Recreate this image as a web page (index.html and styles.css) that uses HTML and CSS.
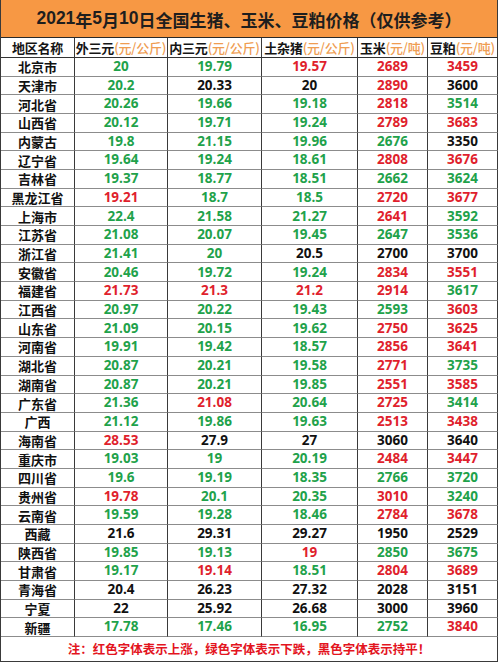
FILE: index.html
```html
<!DOCTYPE html>
<html lang="zh-CN">
<head>
<meta charset="utf-8">
<title>2021年5月10日全国生猪、玉米、豆粕价格</title>
<link rel="stylesheet" href="styles.css">
</head>
<body>
<div class="sheet">
  <div class="title"><span class="tn">2021</span>年<span class="tn">5</span>月<span class="tn">10</span>日全国生猪、玉米、豆粕价格（仅供参考）</div>

  <div class="c hd">地区名称</div>
  <div class="c hd">外三元<span class="u">(元/公斤)</span></div>
  <div class="c hd">内三元<span class="u">(元/公斤)</span></div>
  <div class="c hd">土杂猪<span class="u">(元/公斤)</span></div>
  <div class="c hd">玉米<span class="u">(元/吨)</span></div>
  <div class="c hd">豆粕<span class="u">(元/吨)</span></div>

  <div class="c n">北京市</div><div class="c g">20</div><div class="c g">19.79</div><div class="c r">19.57</div><div class="c r">2689</div><div class="c r">3459</div>
  <div class="c n">天津市</div><div class="c g">20.2</div><div class="c">20.33</div><div class="c">20</div><div class="c r">2890</div><div class="c">3600</div>
  <div class="c n">河北省</div><div class="c g">20.26</div><div class="c g">19.66</div><div class="c g">19.18</div><div class="c r">2818</div><div class="c g">3514</div>
  <div class="c n">山西省</div><div class="c g">20.12</div><div class="c g">19.71</div><div class="c g">19.24</div><div class="c r">2789</div><div class="c r">3683</div>
  <div class="c n">内蒙古</div><div class="c g">19.8</div><div class="c g">21.15</div><div class="c g">19.96</div><div class="c g">2676</div><div class="c">3350</div>
  <div class="c n">辽宁省</div><div class="c g">19.64</div><div class="c g">19.24</div><div class="c g">18.61</div><div class="c r">2808</div><div class="c r">3676</div>
  <div class="c n">吉林省</div><div class="c g">19.37</div><div class="c g">18.77</div><div class="c g">18.51</div><div class="c g">2662</div><div class="c g">3624</div>
  <div class="c n">黑龙江省</div><div class="c r">19.21</div><div class="c g">18.7</div><div class="c g">18.5</div><div class="c r">2720</div><div class="c r">3677</div>
  <div class="c n">上海市</div><div class="c g">22.4</div><div class="c g">21.58</div><div class="c g">21.27</div><div class="c r">2641</div><div class="c g">3592</div>
  <div class="c n">江苏省</div><div class="c g">21.08</div><div class="c g">20.07</div><div class="c g">19.45</div><div class="c g">2647</div><div class="c g">3536</div>
  <div class="c n">浙江省</div><div class="c g">21.41</div><div class="c g">20</div><div class="c">20.5</div><div class="c">2700</div><div class="c">3700</div>
  <div class="c n">安徽省</div><div class="c g">20.46</div><div class="c g">19.72</div><div class="c g">19.24</div><div class="c r">2834</div><div class="c r">3551</div>
  <div class="c n">福建省</div><div class="c r">21.73</div><div class="c r">21.3</div><div class="c r">21.2</div><div class="c r">2914</div><div class="c g">3617</div>
  <div class="c n">江西省</div><div class="c g">20.97</div><div class="c g">20.22</div><div class="c g">19.43</div><div class="c g">2593</div><div class="c r">3603</div>
  <div class="c n">山东省</div><div class="c g">21.09</div><div class="c g">20.15</div><div class="c g">19.62</div><div class="c r">2750</div><div class="c r">3625</div>
  <div class="c n">河南省</div><div class="c g">19.91</div><div class="c g">19.42</div><div class="c g">18.57</div><div class="c r">2856</div><div class="c r">3641</div>
  <div class="c n">湖北省</div><div class="c g">20.87</div><div class="c g">20.21</div><div class="c g">19.58</div><div class="c r">2771</div><div class="c g">3735</div>
  <div class="c n">湖南省</div><div class="c g">20.87</div><div class="c g">20.21</div><div class="c g">19.85</div><div class="c r">2551</div><div class="c r">3585</div>
  <div class="c n">广东省</div><div class="c g">21.36</div><div class="c r">21.08</div><div class="c g">20.64</div><div class="c r">2725</div><div class="c g">3414</div>
  <div class="c n">广西</div><div class="c g">21.12</div><div class="c g">19.86</div><div class="c g">19.63</div><div class="c r">2513</div><div class="c r">3438</div>
  <div class="c n">海南省</div><div class="c r">28.53</div><div class="c">27.9</div><div class="c">27</div><div class="c">3060</div><div class="c">3640</div>
  <div class="c n">重庆市</div><div class="c g">19.03</div><div class="c g">19</div><div class="c g">20.19</div><div class="c r">2484</div><div class="c r">3447</div>
  <div class="c n">四川省</div><div class="c g">19.6</div><div class="c g">19.19</div><div class="c g">18.35</div><div class="c g">2766</div><div class="c g">3720</div>
  <div class="c n">贵州省</div><div class="c r">19.78</div><div class="c g">20.1</div><div class="c g">20.35</div><div class="c r">3010</div><div class="c g">3240</div>
  <div class="c n">云南省</div><div class="c g">19.59</div><div class="c g">19.28</div><div class="c g">18.46</div><div class="c r">2784</div><div class="c r">3678</div>
  <div class="c n">西藏</div><div class="c">21.6</div><div class="c">29.31</div><div class="c">29.27</div><div class="c">1950</div><div class="c">2529</div>
  <div class="c n">陕西省</div><div class="c g">19.85</div><div class="c g">19.13</div><div class="c r">19</div><div class="c g">2850</div><div class="c g">3675</div>
  <div class="c n">甘肃省</div><div class="c g">19.17</div><div class="c r">19.14</div><div class="c g">18.51</div><div class="c r">2804</div><div class="c r">3689</div>
  <div class="c n">青海省</div><div class="c">20.4</div><div class="c">26.23</div><div class="c">27.32</div><div class="c">2028</div><div class="c">3151</div>
  <div class="c n">宁夏</div><div class="c">22</div><div class="c">25.92</div><div class="c">26.68</div><div class="c">3000</div><div class="c">3960</div>
  <div class="c n">新疆</div><div class="c g">17.78</div><div class="c g">17.46</div><div class="c g">16.95</div><div class="c g">2752</div><div class="c r">3840</div>

  <div class="note">注：红色字体表示上涨，绿色字体表示下跌，黑色字体表示持平！</div>
</div>
</body>
</html>
```

FILE: styles.css
```css
* { box-sizing: border-box; }

html, body {
  margin: 0;
  padding: 0;
  background: #ffffff;
}

.sheet {
  width: 498px;
  height: 662px;
  display: grid;
  grid-template-columns: 74px 93px 94px 96px 70px 70px;
  grid-template-rows: 38px 20px repeat(31, 1fr) 25px;
  border-left: 1px solid #3a3a3a;
  font-family: "Open Sans", "Noto Sans CJK SC", sans-serif;
  font-weight: 700;
  color: #111111;
}

.title {
  grid-column: 1 / -1;
  background: #f79844;
  border-right: 1px solid #3a3a3a;
  border-bottom: 1px solid #2a2a2a;
  display: flex;
  align-items: center;
  justify-content: center;
  font-family: "Noto Sans CJK SC", sans-serif;
  font-size: 17px;
  font-weight: 700;
  color: #1e1e1e;
  line-height: 1;
  padding-top: 1px;
}

.tn {
  font-family: "Liberation Sans", Arial, sans-serif;
  font-weight: 700;
  font-size: 17.5px;
}

.c {
  display: flex;
  align-items: center;
  justify-content: center;
  border-right: 1px solid #3a3a3a;
  border-bottom: 1px solid #8c8c8c;
  font-size: 13.5px;
  line-height: 1;
  white-space: nowrap;
  overflow: hidden;
}

.hd {
  font-family: "Noto Sans CJK SC", sans-serif;
  font-size: 13px;
  border-bottom-color: #333333;
  color: #151515;
  letter-spacing: -0.2px;
}

.n {
  font-family: "Noto Sans CJK SC", sans-serif;
  font-size: 13px;
}

.u {
  color: #ef9d52;
  font-weight: 500;
}

.g { color: #1fa24b; }
.r { color: #e01f2d; }

.note {
  grid-column: 1 / -1;
  display: flex;
  align-items: center;
  justify-content: center;
  border-right: 1px solid #3a3a3a;
  border-bottom: 1px solid #3a3a3a;
  font-family: "Noto Sans CJK SC", sans-serif;
  font-size: 12.5px;
  color: #e3141e;
  line-height: 1;
}
```
